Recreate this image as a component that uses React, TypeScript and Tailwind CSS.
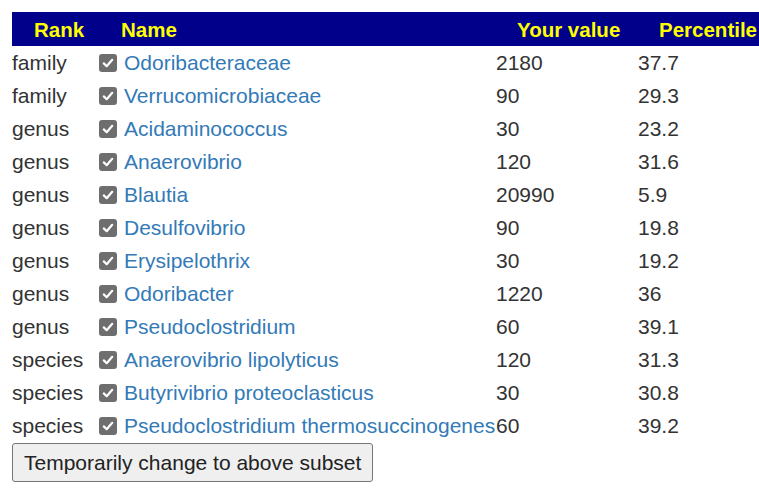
import React from 'react';

type Row = {
  rank: string;
  name: string;
  value: string;
  pct: string;
};

const rows: Row[] = [
  { rank: 'family', name: 'Odoribacteraceae', value: '2180', pct: '37.7' },
  { rank: 'family', name: 'Verrucomicrobiaceae', value: '90', pct: '29.3' },
  { rank: 'genus', name: 'Acidaminococcus', value: '30', pct: '23.2' },
  { rank: 'genus', name: 'Anaerovibrio', value: '120', pct: '31.6' },
  { rank: 'genus', name: 'Blautia', value: '20990', pct: '5.9' },
  { rank: 'genus', name: 'Desulfovibrio', value: '90', pct: '19.8' },
  { rank: 'genus', name: 'Erysipelothrix', value: '30', pct: '19.2' },
  { rank: 'genus', name: 'Odoribacter', value: '1220', pct: '36' },
  { rank: 'genus', name: 'Pseudoclostridium', value: '60', pct: '39.1' },
  { rank: 'species', name: 'Anaerovibrio lipolyticus', value: '120', pct: '31.3' },
  { rank: 'species', name: 'Butyrivibrio proteoclasticus', value: '30', pct: '30.8' },
  { rank: 'species', name: 'Pseudoclostridium thermosuccinogenes', value: '60', pct: '39.2' },
];

const cols = 'grid grid-cols-[88px_396px_142px_130px]';

const CheckBox = () => (
  <span className="-ml-px flex h-[18px] w-[18px] shrink-0 items-center justify-center rounded-[3px] bg-[#6e6e6e]">
    <svg width="12" height="12" viewBox="0 0 12 12" fill="none">
      <path d="M1.8 6.4 L4.7 9.2 L10.2 2.8" stroke="white" strokeWidth="2.2" strokeLinecap="round" strokeLinejoin="round" />
    </svg>
  </span>
);

const App = () => {
  return (
    <div className="min-h-screen w-full overflow-hidden bg-white pl-3 pt-3 font-['Liberation_Sans',Arial,sans-serif] text-[21px] text-[#333]">
      <div className="w-[756px]">
        <div className={`${cols} h-[34px] items-center bg-[#00008b] pt-[2px] text-[20.5px] font-bold text-[#ffff00]`}>
          <div className="pl-[22px]">Rank</div>
          <div className="pl-[21px]">Name</div>
          <div className="pl-[21px]">Your value</div>
          <div className="whitespace-nowrap pl-[21px]">Percentile</div>
        </div>

        {rows.map((r) => (
          <div key={r.name} className={`${cols} h-[33px] items-center pt-px`}>
            <div>{r.rank}</div>
            <div className="flex items-center gap-[7px] whitespace-nowrap">
              <CheckBox />
              <a href="#" className="text-[#337ab7]">
                {r.name}
              </a>
            </div>
            <div>{r.value}</div>
            <div>{r.pct}</div>
          </div>
        ))}
      </div>

      <button className="mt-px h-[39px] rounded-[3px] border border-[#767676] bg-[#efefef] px-[11px] text-[21px] text-[#222]">
        Temporarily change to above subset
      </button>
    </div>
  );
};

export default App;
